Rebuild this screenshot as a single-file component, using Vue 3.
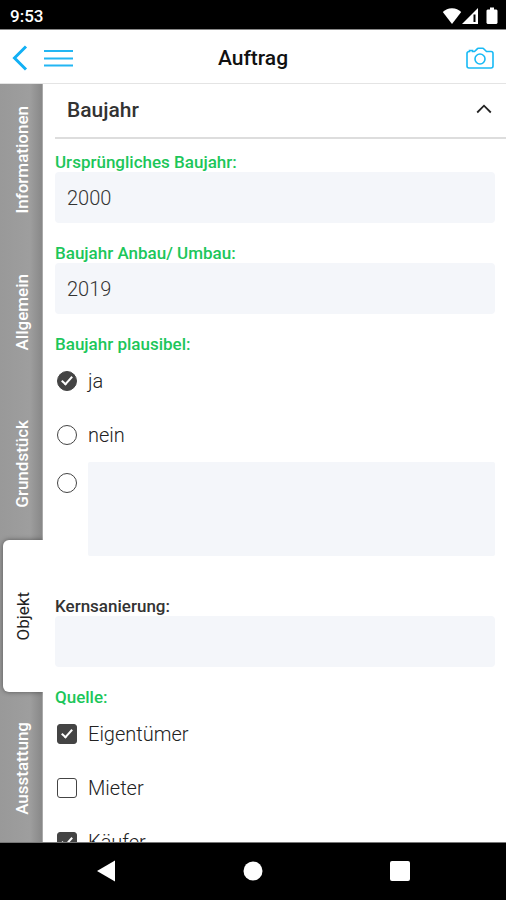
<script setup>
import { ref } from 'vue'

const tabs = ['Informationen', 'Allgemein', 'Grundstück', 'Objekt', 'Ausstattung']
const activeTab = ref('Objekt')
const open = ref(true)

const built = ref('2000')
const rebuilt = ref('2019')
const plausible = ref('ja')
const plausibleNote = ref('')
const renovation = ref('')
const sourceNames = ['Eigentümer', 'Mieter', 'Käufer']
const sources = ref(['Eigentümer', 'Käufer'])
</script>

<template>
  <div class="screen">
    <div class="status">
      <span class="clock">9:53</span>
      <div class="status-icons">
        <svg width="20" height="18" viewBox="0 0 20 18" aria-hidden="true">
          <path d="M10 17 .8 5C3.200 2.500 6.300 1.200 10 1.200S16.800 2.500 19.200 5Z" fill="#fff" />
        </svg>
        <svg width="17" height="18" viewBox="0 0 17 18" aria-hidden="true">
          <path d="M0 17 16 1V17Z" fill="#fff" />
          <path d="M12.500 7.500V15" stroke="#000" stroke-width="2" />
        </svg>
        <svg class="battery" width="12" height="18" viewBox="0 0 12 18" aria-hidden="true">
          <path d="M4 .5h4v2h2.500l1 1V16l-1 1h-9l-1-1V3.500l1-1H4Z" fill="#fff" />
        </svg>
      </div>
    </div>

    <header class="bar">
      <div class="side">
        <button class="icon-button" type="button" aria-label="Zurück">
          <svg width="16" height="26" viewBox="0 0 16 26">
            <path d="M14 1.500 2.500 13 14 24.500" fill="none" stroke="#12b0f5" stroke-width="3" />
          </svg>
        </button>
        <button class="icon-button menu" type="button" aria-label="Menü">
          <svg width="29" height="20" viewBox="0 0 29 20">
            <path d="M0 3h29M0 10.500h29M0 17.500h29" stroke="#22b6f3" stroke-width="2.200" />
          </svg>
        </button>
      </div>
      <h1>Auftrag</h1>
      <div class="side end">
        <button class="icon-button" type="button" aria-label="Kamera">
          <svg width="28" height="22" viewBox="0 0 28 22" fill="none" stroke="#18baf5" stroke-width="1.600">
            <path d="M3.500 4.500V3.500h3v1H8.500L11 2.200Q11.500 1.200 12.500 1.200h4Q17.500 1.200 18.200 2.200L20.500 4.500H25Q27 4.500 27 6.500V19Q27 21 25 21H3Q1 21 1 19V6.500Q1 4.500 3.500 4.500Z" />
            <circle cx="14" cy="12" r="5" />
          </svg>
        </button>
      </div>
    </header>

    <div class="body">
      <nav class="tabs" aria-label="Bereiche">
        <button
          v-for="tab in tabs"
          :key="tab"
          type="button"
          class="tab"
          :class="{ active: tab === activeTab }"
          @click="activeTab = tab"
        >
          <span>{{ tab }}</span>
        </button>
      </nav>

      <main class="content">
        <button class="section" type="button" :aria-expanded="open" @click="open = !open">
          <span>Baujahr</span>
          <svg width="16" height="12" viewBox="0 0 16 12" aria-hidden="true">
            <path d="M1.200 8.500 8 1.700 14.800 8.500" fill="none" stroke="#222" stroke-width="1.800" />
          </svg>
        </button>

        <form v-if="open" class="form" @submit.prevent>
          <div class="field">
            <label class="caption done" for="built">Ursprüngliches Baujahr:</label>
            <input id="built" v-model="built" class="text" type="text" />
          </div>
          <div class="field">
            <label class="caption done" for="rebuilt">Baujahr Anbau/ Umbau:</label>
            <input id="rebuilt" v-model="rebuilt" class="text" type="text" />
          </div>

          <fieldset class="field spaced">
            <legend class="caption done">Baujahr plausibel:</legend>
            <label v-for="answer in ['ja', 'nein']" :key="answer" class="choice">
              <input v-model="plausible" class="mark round" type="radio" name="plausible" :value="answer" />
              <span>{{ answer }}</span>
            </label>
            <div class="free">
              <input v-model="plausible" class="mark round" type="radio" name="plausible" value="other" aria-label="Andere Angabe" />
              <textarea v-model="plausibleNote" class="text note" aria-label="Andere Angabe"></textarea>
            </div>
          </fieldset>

          <div class="field">
            <label class="caption" for="renovation">Kernsanierung:</label>
            <input id="renovation" v-model="renovation" class="text" type="text" />
          </div>

          <fieldset class="field">
            <legend class="caption done">Quelle:</legend>
            <label v-for="name in sourceNames" :key="name" class="choice">
              <input v-model="sources" class="mark" type="checkbox" :value="name" />
              <span>{{ name }}</span>
            </label>
          </fieldset>
        </form>
      </main>
    </div>

    <div class="system">
      <button class="icon-button" type="button" aria-label="Systemnavigation zurück">
        <svg width="20" height="22" viewBox="0 0 20 22"><path d="M1 11 19 .5v21Z" fill="#fff" /></svg>
      </button>
      <button class="icon-button" type="button" aria-label="Startbildschirm">
        <svg width="20" height="20" viewBox="0 0 20 20"><circle cx="10" cy="10" r="9.500" fill="#fff" /></svg>
      </button>
      <button class="icon-button" type="button" aria-label="Letzte Apps">
        <svg width="20" height="20" viewBox="0 0 20 20"><rect width="20" height="20" rx="2" fill="#fff" /></svg>
      </button>
    </div>
  </div>
</template>

<style>
body {
  margin: 0;
}
</style>

<style scoped>
.screen {
  display: flex;
  flex-direction: column;
  height: 100vh;
  overflow: hidden;
  background: #fff;
  color: #333;
  font-family: Roboto, "Liberation Sans", sans-serif;
}

.screen *,
.screen *::after {
  box-sizing: border-box;
}

button,
input,
textarea {
  margin: 0;
  font-family: inherit;
}

svg {
  display: block;
}

.icon-button {
  padding: 0;
  border: 0;
  background: none;
}

.status {
  display: flex;
  flex: none;
  align-items: center;
  justify-content: space-between;
  height: 30px;
  padding: 2px 8px 0 10px;
  border-bottom: 1px solid #888;
  background: #000;
}

.clock {
  color: #fff;
  font-size: 17px;
  font-weight: 500;
  line-height: 20px;
}

.status-icons {
  display: flex;
}

.battery {
  margin-left: 7px;
}

.bar {
  display: flex;
  flex: none;
  align-items: center;
  height: 54px;
  padding: 2px 12px 0;
  border-bottom: 1px solid #e4e4e4;
}

.side {
  display: flex;
  flex: 1;
  align-items: center;
}

.menu {
  margin-left: 16px;
}

.end {
  justify-content: flex-end;
}

h1 {
  margin: 0;
  color: #111;
  font-size: 21px;
  font-weight: 500;
  line-height: 24px;
}

.body {
  display: flex;
  flex: 1;
  min-height: 0;
}

.tabs {
  display: flex;
  flex: none;
  flex-direction: column;
  width: 43px;
  overflow: hidden;
  background: linear-gradient(90deg, #999 0, #9e9e9e 30px, #888 42px, #ccc 43px);
}

.tab {
  display: flex;
  flex: none;
  align-items: center;
  justify-content: center;
  height: 152px;
  padding: 0;
  border: 0;
  background: none;
  color: #fff;
  font-size: 17px;
  font-weight: 500;
}

.tab span {
  writing-mode: vertical-rl;
  transform: rotate(180deg);
}

.tab.active {
  margin-left: 3px;
  border-radius: 6px 0 0 6px;
  background: #fff;
  box-shadow: 0 0 5px rgba(0, 0, 0, 0.45);
  color: #222;
  font-weight: 400;
}

.content {
  flex: 1;
  min-width: 0;
  overflow: hidden;
  padding-left: 12px;
}

.section {
  display: flex;
  align-items: center;
  justify-content: space-between;
  width: 100%;
  height: 55px;
  padding: 0 14px 2px 12px;
  border: 0;
  border-bottom: 2px solid #ddd;
  background: none;
  color: #333;
  font-size: 21px;
  font-weight: 500;
  line-height: 24px;
}

.form {
  display: flex;
  flex-direction: column;
  gap: 20px;
  padding: 13px 11px 0 0;
}

.field {
  display: flex;
  flex-direction: column;
  min-width: 0;
  margin: 0;
  padding: 0;
  border: 0;
}

.spaced {
  margin-bottom: 20px;
}

.caption {
  padding: 0;
  color: #333;
  font-size: 17px;
  font-weight: 500;
  line-height: 20px;
}

.done {
  color: #1cc65a;
}

.text {
  width: 100%;
  height: 51px;
  padding: 0 12px;
  border: 0;
  border-radius: 4px;
  outline: 0;
  background: #f4f6fa;
  color: #333;
  font-size: 20px;
  font-weight: 300;
}

.note {
  flex: 1;
  height: 94px;
  padding: 12px;
  border-radius: 2px;
  resize: none;
}

.choice {
  display: flex;
  align-items: center;
  gap: 11px;
  height: 54px;
  padding-left: 2px;
  color: #222;
  font-size: 20px;
  font-weight: 300;
  line-height: 24px;
}

.free {
  display: flex;
  align-items: flex-start;
  gap: 11px;
  padding-left: 2px;
}

.free .mark {
  margin-top: 11px;
}

.mark {
  display: flex;
  flex: none;
  justify-content: center;
  width: 20px;
  height: 20px;
  border: 1px solid #444;
  border-radius: 3px;
  appearance: none;
  background: #fff;
}

.round {
  border-radius: 50%;
}

.mark:checked {
  background: #444;
}

.mark:checked::after {
  content: "";
  width: 6px;
  height: 11px;
  margin-top: 2px;
  border: solid #fff;
  border-width: 0 2px 2px 0;
  transform: rotate(42deg);
}

.system {
  display: flex;
  flex: none;
  align-items: center;
  justify-content: space-around;
  height: 58px;
  padding: 0 33px 1px;
  border-top: 1px solid #777;
  background: #000;
}
</style>
